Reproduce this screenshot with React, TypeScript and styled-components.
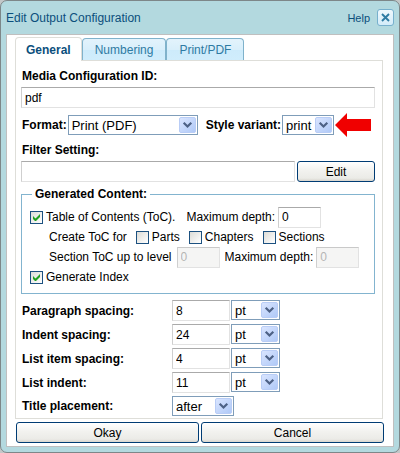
import React, { useState } from "react";
import styled, { createGlobalStyle } from "styled-components";

const GlobalStyle = createGlobalStyle`
  * { box-sizing: border-box; }
  body {
    margin: 0;
    background: #c3c7c8;
    font-family: "Liberation Sans", Arial, sans-serif;
    font-size: 12px;
    line-height: 14px;
    color: #000;
  }
  input, select, button { font-family: inherit; color: inherit; }
`;

const Dialog = styled.section`
  background: #b3d9df;
  border: 1px solid #7d8789;
  border-radius: 7px;
  padding: 0 5px 5px;
`;

const TitleBar = styled.header`
  display: flex;
  align-items: center;
  gap: 7px;
  height: 33px;
  color: #0b4f7c;
`;

const Title = styled.h1`
  flex: 1;
  margin: 0;
  font-size: 12px;
  font-weight: 400;
`;

const HelpLink = styled.a`
  color: #0b4f7c;
  font-size: 11px;
  text-decoration: none;
`;

const CloseButton = styled.button`
  display: flex;
  align-items: center;
  justify-content: center;
  width: 17px;
  height: 17px;
  padding: 0;
  border: 1px solid #77b0cd;
  border-radius: 3px;
  background: linear-gradient(#eff8fd, #d3ecf9);
`;

const Body = styled.div`
  border: 1px solid #bfbfbf;
  background: #fff;
  padding: 2px 8px 3px;
`;

const Tabs = styled.div`
  display: flex;
  align-items: flex-end;
  padding-right: 2px;
`;

const Tab = styled.button<{ $active?: boolean }>`
  position: relative;
  height: ${(p) => (p.$active ? 24 : 22)}px;
  padding: 0 ${(p) => (p.$active ? 10 : 12)}px;
  font-size: 12px;
  font-weight: ${(p) => (p.$active ? 700 : 400)};
  color: ${(p) => (p.$active ? "#0b4f7c" : "#2e7ba3")};
  background: ${(p) => (p.$active ? "#fff" : "linear-gradient(#e3f3fc, #d9effb 50%, #cdebfb 51%, #d0edfc)")};
  border: 1px solid ${(p) => (p.$active ? "#deded9" : "#7fb2cb")};
  border-bottom: 0;
  border-radius: 4px 4px 0 0;
  margin-bottom: ${(p) => (p.$active ? -1 : 0)}px;
`;

const Panel = styled.div`
  border: 1px solid #deded9;
  margin-right: 2px;
  padding: 8px 7px 2px 5px;
`;

const Label = styled.label`
  font-weight: 700;
  padding-left: 1px;
  white-space: nowrap;
`;

const Stack = styled.div`
  display: flex;
  flex-direction: column;
  gap: 4px;
`;

const TextInput = styled.input<{ $width?: number }>`
  ${(p) => (p.$width ? `width: ${p.$width}px;` : "flex: 1; min-width: 0;")}
  height: 21px;
  padding: 0 3px;
  font-size: 12px;
  background: #fff;
  border: 1px solid #e2e2e2;
  border-top-color: #aaa;
  border-left-color: #cfcfcf;
  border-radius: 0;
  &:disabled {
    color: #b5b5b5;
    background: #f5f5f4;
    border-top-color: #c9c9c9;
  }
`;

const FormatRow = styled.div`
  display: flex;
  align-items: center;
  margin-top: 7px;
  height: 20px;
`;

const FormatField = styled.div<{ $after?: boolean }>`
  display: flex;
  align-items: center;
  gap: 1px;
  margin-left: ${(p) => (p.$after ? 7 : 0)}px;
`;

const InputRow = styled.div`
  display: flex;
  gap: 2px;
`;

const SelectBox = styled.span<{ $width: number }>`
  display: inline-grid;
  flex: none;
  width: ${(p) => p.$width}px;
  height: 20px;
`;

const SelectControl = styled.select`
  grid-area: 1 / 1;
  appearance: none;
  width: 100%;
  height: 20px;
  padding: 0 18px 0 3px;
  font-size: 13px;
  background: #fff;
  border: 1px solid #7f9db9;
  border-radius: 0;
`;

const SelectArrow = styled.svg`
  grid-area: 1 / 1;
  place-self: center end;
  margin-right: 2px;
  pointer-events: none;
`;

const RedArrow = styled.svg`
  flex: none;
  margin-left: 1px;
`;

const FilterStack = styled(Stack)`
  margin-top: 8px;
`;

const XpButton = styled.button<{ $width?: number }>`
  ${(p) => (p.$width ? `width: ${p.$width}px;` : "flex: 1;")}
  height: 21px;
  padding: 0;
  font-size: 12px;
  border: 1px solid #003c74;
  border-radius: 3px;
  background: linear-gradient(#fff, #f2f2ef 45%, #ebebe7 85%, #d8d5cd);
`;

const Group = styled.fieldset`
  margin: 5px 0 0;
  min-width: 0;
  border: 1px solid #83b4cf;
  padding: 6px 8px 6px;
`;

const Legend = styled.legend`
  margin-left: 2px;
  padding: 0 3px;
  font-weight: 700;
`;

const OptionRow = styled.div<{ $indent?: boolean }>`
  display: flex;
  align-items: center;
  height: 20px;
  padding-left: ${(p) => (p.$indent ? 19 : 0)}px;
  white-space: nowrap;
`;

const CheckLabel = styled.label<{ $gap?: number }>`
  display: inline-flex;
  align-items: center;
  gap: 3px;
  margin-left: ${(p) => p.$gap || 0}px;
`;

const CheckInput = styled.input`
  appearance: none;
  width: 13px;
  height: 13px;
  margin: 0;
  border: 1px solid #1c5180;
  background: linear-gradient(135deg, #dcdcd7, #fff);
  &:checked {
    background:
      url("data:image/svg+xml,%3Csvg xmlns='http://www.w3.org/2000/svg' viewBox='0 0 11 11'%3E%3Cpath d='M2 4v3l2 2h1l4-4V2L4.500 6.500z' fill='%2321a121'/%3E%3C/svg%3E") center / 11px 11px no-repeat,
      linear-gradient(135deg, #dcdcd7, #fff);
  }
`;

const DepthLabel = styled.label<{ $gap: number }>`
  display: inline-flex;
  align-items: center;
  gap: 3px;
  margin-left: ${(p) => p.$gap}px;
`;

const LevelLabel = styled.label`
  display: inline-flex;
  align-items: center;
  gap: 5px;
`;

const Settings = styled.div`
  display: grid;
  grid-template-columns: 149px 1fr;
  row-gap: 3px;
  align-items: center;
  margin: 6px 0 0 1px;
  ${Label} { padding-left: 0; }
`;

const ValueCell = styled.div`
  display: flex;
  gap: 1px;
  margin-left: 1px;
`;

const Footer = styled.footer`
  display: flex;
  gap: 2px;
  margin: 3px 1px 0;
`;

function Select({ id, width, options, label }: { id: string; width: number; options: string[]; label?: string }) {
  return (
    <SelectBox $width={width}>
      <SelectControl id={id} aria-label={label} defaultValue={options[0]}>
        {options.map((o) => (
          <option key={o}>{o}</option>
        ))}
      </SelectControl>
      <SelectArrow width="17" height="16" viewBox="0 0 17 16" aria-hidden="true">
        <defs>
          <linearGradient id={`${id}-face`} x1="0" y1="0" x2="1" y2="1">
            <stop offset="0" stopColor="#dbe6ff" />
            <stop offset="1" stopColor="#aec8f7" />
          </linearGradient>
        </defs>
        <rect x="0.500" y="0.500" width="16" height="15" rx="1.500" fill={`url(#${id}-face)`} stroke="#b9cdf6" />
        <path d="M4.700 5.700 8.500 9.500l3.800-3.800" fill="none" stroke="#4d6185" strokeWidth="2.200" />
      </SelectArrow>
    </SelectBox>
  );
}

function Check({ text, checked, gap }: { text: string; checked?: boolean; gap?: number }) {
  return (
    <CheckLabel $gap={gap}>
      <CheckInput type="checkbox" defaultChecked={checked} />
      {text}
    </CheckLabel>
  );
}

const spacings = [
  { id: "paragraph", label: "Paragraph spacing:", value: "8" },
  { id: "indent", label: "Indent spacing:", value: "24" },
  { id: "list-item", label: "List item spacing:", value: "4" },
  { id: "list-indent", label: "List indent:", value: "11" },
];

const tabs = ["General", "Numbering", "Print/PDF"];

export default function App() {
  const [tab, setTab] = useState("General");
  return (
    <>
      <GlobalStyle />
      <Dialog role="dialog" aria-labelledby="dialog-title">
        <TitleBar>
          <Title id="dialog-title">Edit Output Configuration</Title>
          <HelpLink href="#help">Help</HelpLink>
          <CloseButton type="button" aria-label="Close">
            <svg width="9" height="9" viewBox="0 0 9 9" aria-hidden="true">
              <path d="M1 1l7 7M8 1L1 8" stroke="#2e7ba3" strokeWidth="1.900" />
            </svg>
          </CloseButton>
        </TitleBar>
        <Body>
          <Tabs role="tablist">
            {tabs.map((t) => (
              <Tab key={t} type="button" role="tab" aria-selected={t === tab} $active={t === tab} onClick={() => setTab(t)}>
                {t}
              </Tab>
            ))}
          </Tabs>
          <Panel role="tabpanel">
            <Stack>
              <Label htmlFor="media-id">Media Configuration ID:</Label>
              <InputRow>
                <TextInput id="media-id" defaultValue="pdf" />
              </InputRow>
            </Stack>
            <FormatRow>
              <FormatField>
                <Label htmlFor="format">Format:</Label>
                <Select id="format" width={130} options={["Print (PDF)"]} />
              </FormatField>
              <FormatField $after>
                <Label htmlFor="variant">Style variant:</Label>
                <Select id="variant" width={52} options={["print"]} />
              </FormatField>
              <RedArrow width="36" height="24" viewBox="0 0 36 24" aria-hidden="true">
                <path d="M0 12 12 0v6h24v12H12v6z" fill="#f00000" />
              </RedArrow>
            </FormatRow>
            <FilterStack>
              <Label htmlFor="filter">Filter Setting:</Label>
              <InputRow>
                <TextInput id="filter" />
                <XpButton type="button" $width={78}>Edit</XpButton>
              </InputRow>
            </FilterStack>
            <Group>
              <Legend>Generated Content:</Legend>
              <OptionRow>
                <Check text="Table of Contents (ToC)." checked />
                <DepthLabel $gap={11}>
                  Maximum depth:
                  <TextInput $width={43} defaultValue="0" />
                </DepthLabel>
              </OptionRow>
              <OptionRow $indent>
                Create ToC for
                <Check text="Parts" gap={9} />
                <Check text="Chapters" gap={9} />
                <Check text="Sections" gap={9} />
              </OptionRow>
              <OptionRow $indent>
                <LevelLabel>
                  Section ToC up to level
                  <TextInput $width={43} defaultValue="0" disabled />
                </LevelLabel>
                <DepthLabel $gap={5}>
                  Maximum depth:
                  <TextInput $width={43} defaultValue="0" disabled />
                </DepthLabel>
              </OptionRow>
              <OptionRow>
                <Check text="Generate Index" checked />
              </OptionRow>
            </Group>
            <Settings>
              {spacings.map((s) => (
                <React.Fragment key={s.id}>
                  <Label htmlFor={s.id}>{s.label}</Label>
                  <ValueCell>
                    <TextInput id={s.id} $width={58} defaultValue={s.value} />
                    <Select id={`${s.id}-unit`} label={`${s.label} unit`} width={49} options={["pt"]} />
                  </ValueCell>
                </React.Fragment>
              ))}
              <Label htmlFor="title-placement">Title placement:</Label>
              <ValueCell>
                <Select id="title-placement" width={62} options={["after"]} />
              </ValueCell>
            </Settings>
          </Panel>
          <Footer>
            <XpButton type="button">Okay</XpButton>
            <XpButton type="button">Cancel</XpButton>
          </Footer>
        </Body>
      </Dialog>
    </>
  );
}
